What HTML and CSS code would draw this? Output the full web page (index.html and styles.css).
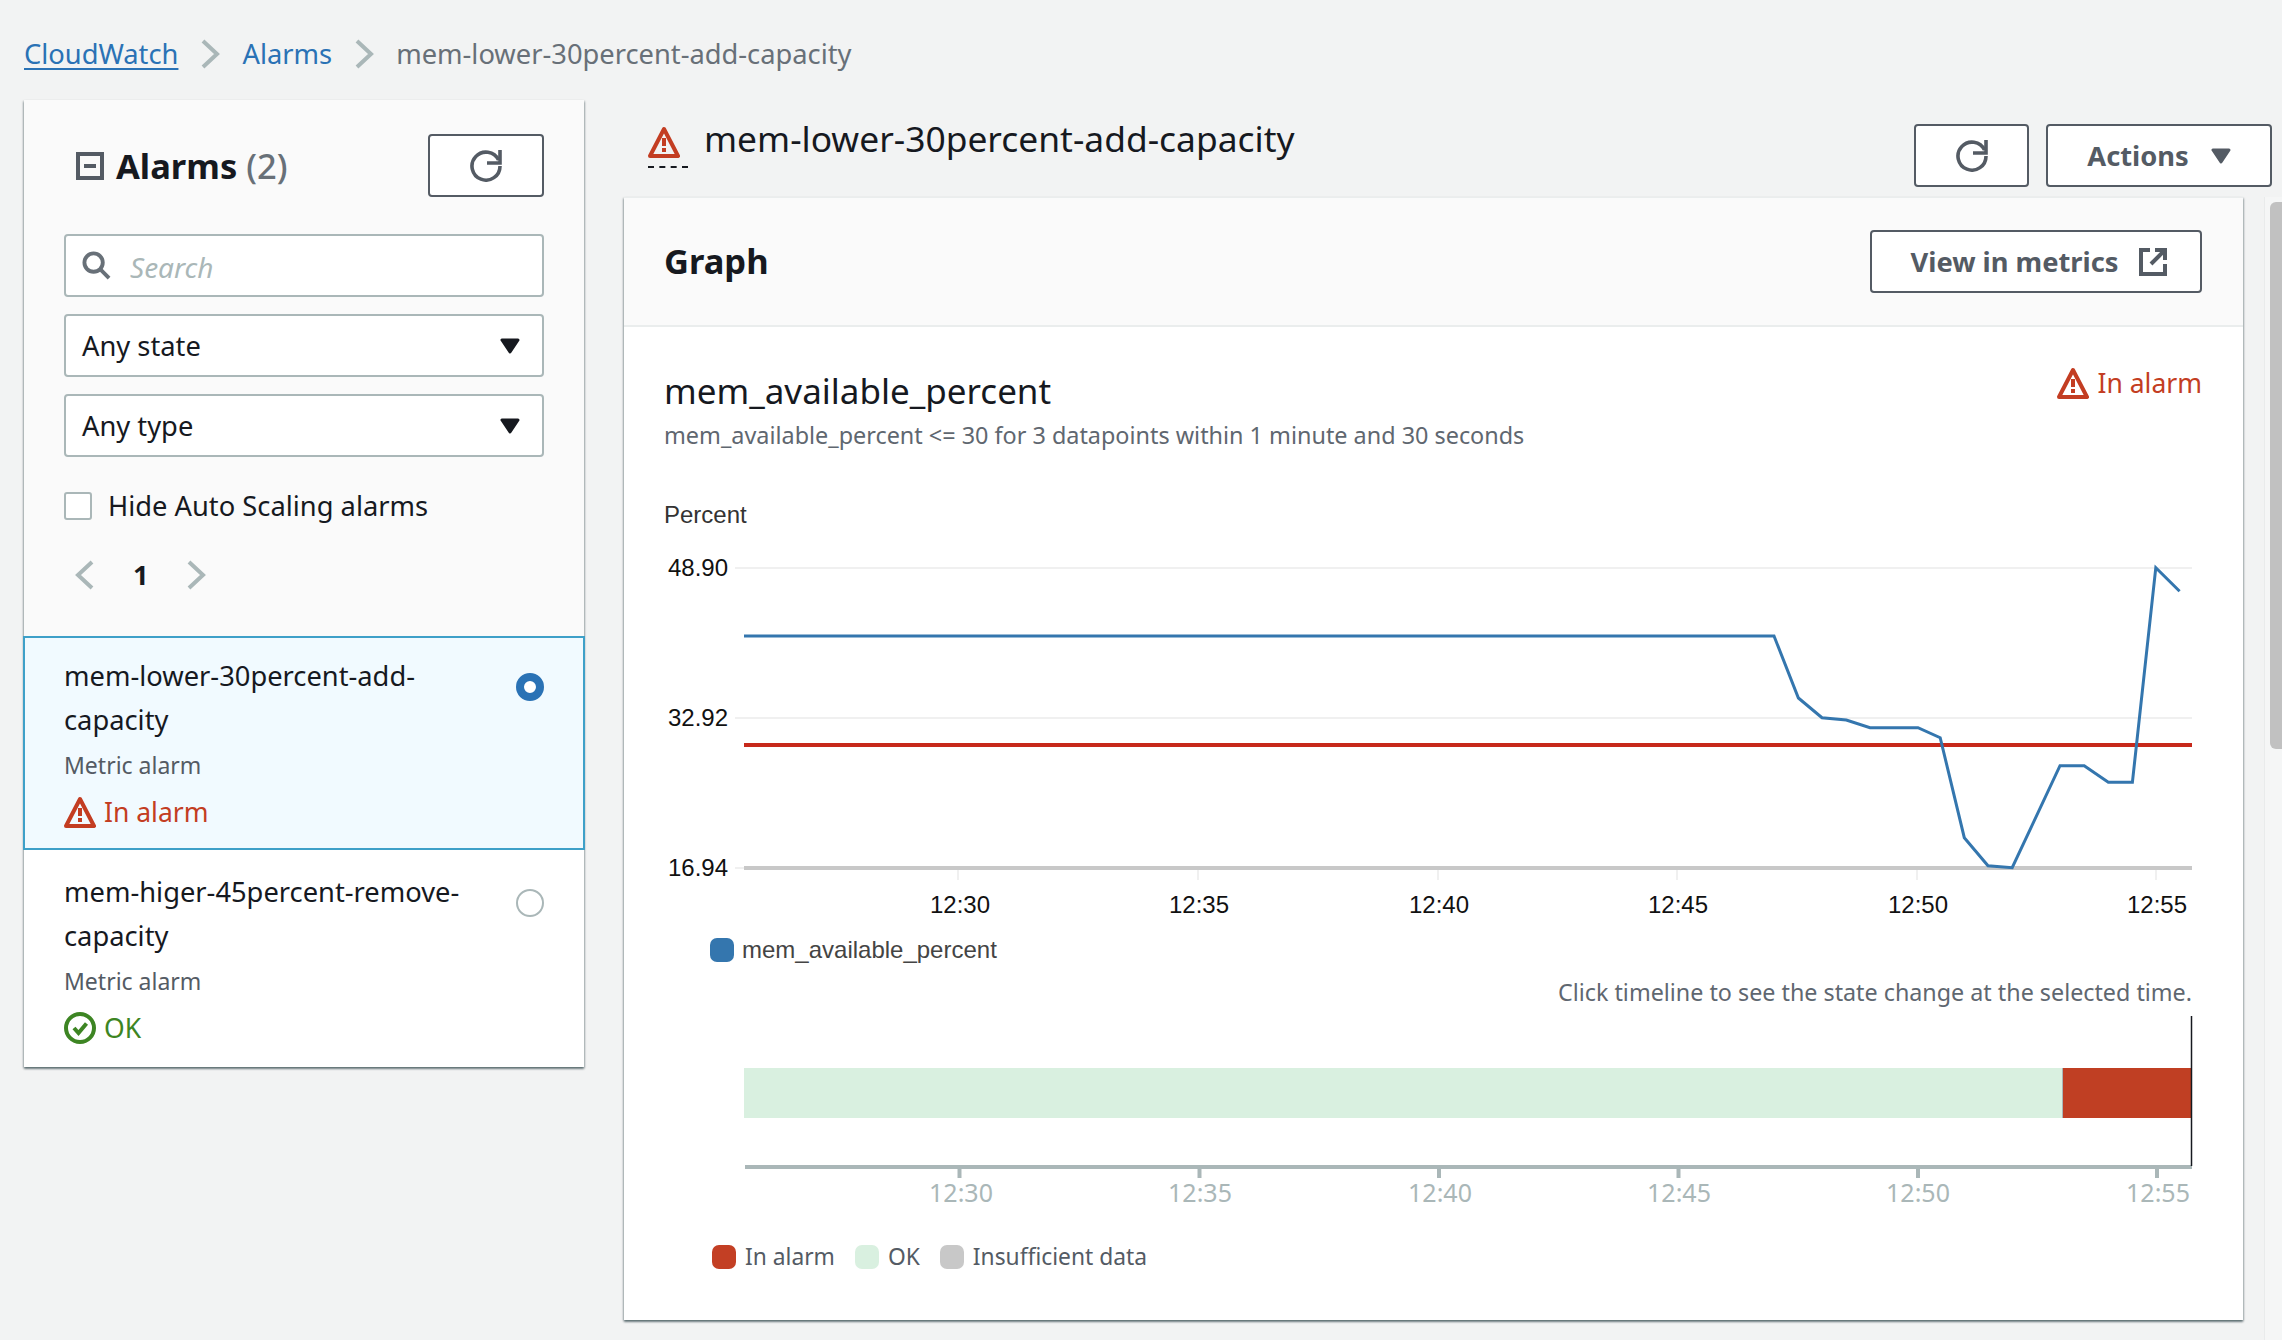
FILE: index.html
```html
<!DOCTYPE html>
<html lang="en">
<head>
    <meta charset="UTF-8">
    <meta name="viewport" content="width=device-width, initial-scale=1.0">
    <title>mem-lower-30percent-add-capacity</title>
    <link rel="stylesheet" href="styles.css">
</head>
<body>
    <svg class="icon-defs" aria-hidden="true">
        <symbol id="i-warning" viewBox="0 0 32 32">
            <path d="M16 3 L30 30 H2 Z" fill="none" stroke="currentColor" stroke-width="4" stroke-linejoin="round"/>
            <rect x="14" y="12" width="4" height="8" fill="currentColor"/>
            <rect x="14" y="22" width="4" height="4" fill="currentColor"/>
        </symbol>
        <symbol id="i-ok" viewBox="0 0 32 32">
            <circle cx="16" cy="16" r="14" fill="none" stroke="currentColor" stroke-width="4"/>
            <path d="M10 16 L14.5 21 L22.5 11.5" fill="none" stroke="currentColor" stroke-width="4"/>
        </symbol>
        <symbol id="i-refresh" viewBox="0 0 32 32">
            <g fill="none" stroke="currentColor" stroke-width="3.6">
                <path d="M17 13 H30 V0"/>
                <path d="M28.6 10 A14 14 0 1 0 30 16"/>
            </g>
        </symbol>
        <symbol id="i-caret" viewBox="0 0 20 16">
            <path d="M2 2 H18 L10 14 Z" fill="currentColor" stroke="currentColor" stroke-width="3" stroke-linejoin="round"/>
        </symbol>
        <symbol id="i-external" viewBox="0 0 28 28">
            <g fill="none" stroke="currentColor" stroke-width="4">
                <path d="M11 2 H2 V26 H26 V16"/>
                <path d="M16 2 H26 V12"/>
                <path d="M26 2 L12 16"/>
            </g>
        </symbol>
        <symbol id="i-chevron" viewBox="0 0 20 30">
            <path d="M3 2 L17 15 L3 28" fill="none" stroke="currentColor" stroke-width="4"/>
        </symbol>
    </svg>

    <nav class="breadcrumb">
        <a class="crumb-link crumb-first" href="#">CloudWatch</a>
        <svg class="crumb-sep"><use href="#i-chevron"/></svg>
        <a class="crumb-link" href="#">Alarms</a>
        <svg class="crumb-sep"><use href="#i-chevron"/></svg>
        <span class="crumb-current">mem-lower-30percent-add-capacity</span>
    </nav>

    <div class="layout">
        <aside class="side">
            <div class="side-top">
                <div class="side-head">
                    <div class="side-title">
                        <svg class="collapse-icon" viewBox="0 0 28 28">
                            <rect x="2" y="2" width="24" height="24" fill="none" stroke="currentColor" stroke-width="4"/>
                            <rect x="8" y="12" width="12" height="4" fill="currentColor"/>
                        </svg>
                        <h2>Alarms <span class="count">(2)</span></h2>
                    </div>
                    <button class="btn btn-refresh"><svg class="refresh-icon"><use href="#i-refresh"/></svg></button>
                </div>

                <div class="field search-field">
                    <svg class="search-icon" viewBox="0 0 30 30">
                        <circle cx="12" cy="12" r="9.5" fill="none" stroke="currentColor" stroke-width="4"/>
                        <path d="M19 19 L28 28" stroke="currentColor" stroke-width="4"/>
                    </svg>
                    <span class="placeholder">Search</span>
                </div>
                <div class="field select-field">Any state <svg class="caret"><use href="#i-caret"/></svg></div>
                <div class="field select-field">Any type <svg class="caret"><use href="#i-caret"/></svg></div>

                <label class="hide-row"><span class="checkbox"></span>Hide Auto Scaling alarms</label>

                <div class="pager">
                    <svg class="pager-arrow pager-prev"><use href="#i-chevron"/></svg>
                    <span class="pager-num">1</span>
                    <svg class="pager-arrow"><use href="#i-chevron"/></svg>
                </div>
            </div>

            <div class="alarm-list">
                <div class="alarm-item selected">
                    <div class="alarm-text">
                        <div class="alarm-name">mem-lower-30percent-add-capacity</div>
                        <div class="alarm-type">Metric alarm</div>
                        <div class="status status-alarm"><svg class="status-icon"><use href="#i-warning"/></svg>In alarm</div>
                    </div>
                    <span class="radio radio-on"></span>
                </div>
                <div class="alarm-item">
                    <div class="alarm-text">
                        <div class="alarm-name">mem-higer-45percent-remove-capacity</div>
                        <div class="alarm-type">Metric alarm</div>
                        <div class="status status-ok"><svg class="status-icon"><use href="#i-ok"/></svg>OK</div>
                    </div>
                    <span class="radio"></span>
                </div>
            </div>
        </aside>

        <main class="content">
            <div class="page-head">
                <div class="page-title">
                    <span class="title-icon"><svg class="status-icon"><use href="#i-warning"/></svg></span>
                    <h1>mem-lower-30percent-add-capacity</h1>
                </div>
                <div class="page-actions">
                    <button class="btn btn-refresh btn-refresh-main"><svg class="refresh-icon"><use href="#i-refresh"/></svg></button>
                    <button class="btn btn-actions">Actions <svg class="caret"><use href="#i-caret"/></svg></button>
                </div>
            </div>

            <section class="card">
                <header class="card-head">
                    <h2>Graph</h2>
                    <button class="btn btn-metrics">View in metrics <svg class="external-icon"><use href="#i-external"/></svg></button>
                </header>

                <div class="graph-info">
                    <div class="graph-title">
                        <div>
                            <h3>mem_available_percent</h3>
                            <p class="graph-desc">mem_available_percent &lt;= 30 for 3 datapoints within 1 minute and 30 seconds</p>
                        </div>
                        <div class="status status-alarm graph-status"><svg class="status-icon"><use href="#i-warning"/></svg>In alarm</div>
                    </div>
                    <div class="axis-name">Percent</div>
                </div>

                <!-- viewBox uses page coordinates so points can be read off the chart directly -->
                <svg class="chart" viewBox="624 535 1619 390">
                    <g class="grid">
                        <line x1="735" y1="568" x2="2192" y2="568"/>
                        <line x1="735" y1="718" x2="2192" y2="718"/>
                        <line x1="735" y1="868" x2="744" y2="868"/>
                        <line x1="958" y1="868" x2="958" y2="880"/>
                        <line x1="1198" y1="868" x2="1198" y2="880"/>
                        <line x1="1438" y1="868" x2="1438" y2="880"/>
                        <line x1="1677" y1="868" x2="1677" y2="880"/>
                        <line x1="1917" y1="868" x2="1917" y2="880"/>
                        <line x1="2156" y1="868" x2="2156" y2="880"/>
                    </g>
                    <line class="x-axis" x1="744" y1="868" x2="2192" y2="868"/>
                    <line class="threshold" x1="744" y1="745" x2="2192" y2="745"/>
                    <polyline class="series" points="744,636 1774,636 1798.4,698 1822,717.7 1846.3,720 1870,727.7 1918,727.7 1940.2,737.7 1964.3,837.7 1988,865.7 2012.2,867.7 2060,765.7 2084.2,765.7 2108.3,782.3 2132.4,782.3 2155.8,567.7 2179.6,591.3"/>
                    <g class="y-labels">
                        <text x="728" y="576">48.90</text>
                        <text x="728" y="726">32.92</text>
                        <text x="728" y="876">16.94</text>
                    </g>
                    <g class="x-labels">
                        <text x="960" y="913">12:30</text>
                        <text x="1199" y="913">12:35</text>
                        <text x="1439" y="913">12:40</text>
                        <text x="1678" y="913">12:45</text>
                        <text x="1918" y="913">12:50</text>
                        <text x="2157" y="913">12:55</text>
                    </g>
                </svg>

                <div class="legend series-legend">
                    <span class="legend-item legend-series"><i class="swatch swatch-blue"></i>mem_available_percent</span>
                </div>

                <p class="timeline-hint">Click timeline to see the state change at the selected time.</p>

                <svg class="timeline" viewBox="624 1016 1619 194">
                    <rect class="tl-ok" x="744" y="1068" width="1319" height="50"/>
                    <rect class="tl-alarm" x="2063" y="1068" width="129" height="50"/>
                    <line class="tl-edge" x1="2062.5" y1="1068" x2="2062.5" y2="1118"/>
                    <line class="tl-axis" x1="745" y1="1167" x2="2192" y2="1167"/>
                    <g class="tl-ticks">
                        <line x1="959.5" y1="1167" x2="959.5" y2="1178"/>
                        <line x1="1199.5" y1="1167" x2="1199.5" y2="1178"/>
                        <line x1="1439" y1="1167" x2="1439" y2="1178"/>
                        <line x1="1678.5" y1="1167" x2="1678.5" y2="1178"/>
                        <line x1="1918" y1="1167" x2="1918" y2="1178"/>
                        <line x1="2157" y1="1167" x2="2157" y2="1178"/>
                    </g>
                    <line class="tl-cursor" x1="2191.5" y1="1016" x2="2191.5" y2="1166"/>
                    <g class="tl-labels">
                        <text x="961" y="1202">12:30</text>
                        <text x="1200" y="1202">12:35</text>
                        <text x="1440" y="1202">12:40</text>
                        <text x="1679" y="1202">12:45</text>
                        <text x="1918" y="1202">12:50</text>
                        <text x="2158" y="1202">12:55</text>
                    </g>
                </svg>

                <div class="legend state-legend">
                    <span class="legend-item"><i class="swatch swatch-red"></i>In alarm</span>
                    <span class="legend-item"><i class="swatch swatch-green"></i>OK</span>
                    <span class="legend-item"><i class="swatch swatch-gray"></i>Insufficient data</span>
                </div>
            </section>
        </main>
    </div>

    <div class="scrollbar"><div class="scroll-thumb"></div></div>
</body>
</html>
```

FILE: styles.css
```css
* {
    box-sizing: border-box;
}
body {
    margin: 0;
    height: 1340px;
    overflow: hidden;
    background-color: #f2f3f3;
    color: #16191f;
    font-family: "Noto Sans", Arial, sans-serif;
    font-size: 27.3px;
    line-height: 44px;
}
h1, h2, h3, p {
    margin: 0;
    font-weight: normal;
}
.icon-defs {
    display: none;
}

/* breadcrumb */
.breadcrumb {
    display: flex;
    align-items: center;
    height: 100px;
    padding: 8px 0 0 24px;
}
.crumb-link {
    color: #2a72b5;
    text-decoration: none;
}
.crumb-first {
    text-decoration: underline;
    text-underline-offset: 4px;
    text-decoration-thickness: 2px;
}
.crumb-sep {
    width: 20px;
    height: 30px;
    margin: 0 22px 0 22px;
    color: #aab7b8;
}
.crumb-current {
    color: #687078;
}

.layout {
    display: flex;
    gap: 40px;
    padding-left: 24px;
}

/* left panel */
.side {
    width: 560px;
    flex: none;
    align-self: flex-start;
    background-color: #fff;
    box-shadow: 0 2px 2px rgba(0, 28, 36, 0.45), 1px 1px 2px rgba(0, 28, 36, 0.2), -1px 1px 2px rgba(0, 28, 36, 0.2);
}
.side-top {
    padding: 34px 40px 39px;
    background-color: #fafafa;
}
.side-head {
    display: flex;
    justify-content: space-between;
    align-items: center;
}
.side-title {
    display: flex;
    align-items: center;
    gap: 12px;
    padding-left: 12px;
}
.collapse-icon {
    width: 28px;
    height: 28px;
    color: #545b64;
}
.side-title h2 {
    font-size: 34.5px;
    font-weight: bold;
}
.count {
    font-weight: 500;
    color: #687078;
}

.btn {
    display: flex;
    align-items: center;
    justify-content: center;
    height: 63px;
    background-color: #fff;
    border: 2px solid #545b64;
    border-radius: 4px;
    color: #545b64;
    font-family: inherit;
    font-size: 27.3px;
    font-weight: bold;
    padding: 0;
}
.btn-refresh {
    width: 116px;
}
.btn-refresh-main {
    width: 115px;
}
.refresh-icon {
    width: 32px;
    height: 32px;
}
.caret {
    width: 20px;
    height: 16px;
}

.field {
    display: flex;
    align-items: center;
    height: 63px;
    padding: 0 16px;
    background-color: #fff;
    border: 2px solid #aab7b8;
    border-radius: 4px;
}
.search-field {
    margin-top: 37px;
    gap: 19px;
}
.search-icon {
    width: 29px;
    height: 29px;
    color: #687078;
}
.placeholder {
    padding-top: 2px;
    color: #aab7b8;
    font-size: 28px;
    font-style: italic;
}
.select-field {
    margin-top: 17px;
    justify-content: space-between;
    padding-right: 22px;
}
.hide-row {
    display: flex;
    align-items: center;
    gap: 16px;
    margin-top: 27px;
}
.checkbox {
    width: 28px;
    height: 28px;
    background-color: #fff;
    border: 2px solid #aab7b8;
    border-radius: 3px;
}
.pager {
    display: flex;
    align-items: center;
    margin-top: 25px;
    padding-left: 11px;
}
.pager-arrow {
    width: 20px;
    height: 30px;
    color: #aab7b8;
}
.pager-prev {
    transform: scaleX(-1);
}
.pager-num {
    margin: 0 37px 0 38px;
    font-weight: bold;
}

/* alarm list */
.alarm-list {
    padding-bottom: 5px;
}
.alarm-item {
    display: flex;
    justify-content: space-between;
    align-items: flex-start;
    padding: 18px 40px 18px 40px;
}
.alarm-item.selected {
    margin: 0 -1px 2px;
    padding: 16px 39px 20px 39px;
    background-color: #f1faff;
    border: 2px solid #3ea0c8;
}
.alarm-text {
    width: 420px;
}
.alarm-type {
    margin-top: 7px;
    color: #545b64;
    font-size: 23px;
    line-height: 32px;
}
.status {
    display: flex;
    align-items: center;
    gap: 8px;
    margin-top: 15px;
    font-size: 26.5px;
    line-height: 32px;
}
.status-icon {
    width: 32px;
    height: 32px;
    flex: none;
}
.status-alarm {
    color: #c33d22;
}
.status-ok {
    color: #3d8523;
}
.radio {
    width: 28px;
    height: 28px;
    margin-top: 19px;
    background-color: #fff;
    border: 2px solid #aab7b8;
    border-radius: 50%;
}
.radio-on {
    border: 8px solid #2a72b5;
}

/* main column */
.content {
    flex: 1;
}
.page-head {
    display: flex;
    justify-content: space-between;
    align-items: flex-start;
    height: 97px;
    padding-right: 10px;
}
.page-title {
    display: flex;
    padding: 16px 0 0 24px;
}
.title-icon {
    width: 40px;
    height: 42px;
    margin: 10px 16px 0 0;
    color: #c33d22;
    border-bottom: 2px dashed #16191f;
}
.page-title h1 {
    font-size: 35.4px;
    line-height: 44px;
}
.page-actions {
    display: flex;
    gap: 17px;
    padding-top: 24px;
}
.btn-actions {
    width: 226px;
    gap: 22px;
}

.card {
    width: 1619px;
    background-color: #fff;
    padding-bottom: 51px;
    box-shadow: 0 2px 2px rgba(0, 28, 36, 0.45), 1px 1px 2px rgba(0, 28, 36, 0.2), -1px 1px 2px rgba(0, 28, 36, 0.2);
}
.card-head {
    display: flex;
    justify-content: space-between;
    align-items: center;
    height: 130px;
    padding: 0 41px 0 40px;
    background-color: #fafafa;
    border-top: 1px solid #eaeded;
    border-bottom: 2px solid #eaeded;
}
.card-head h2 {
    margin-top: -2px;
    font-size: 34.5px;
    font-weight: bold;
}
.btn-metrics {
    width: 332px;
    gap: 20px;
    padding-left: 5px;
}
.external-icon {
    width: 28px;
    height: 28px;
}
.graph-info {
    padding: 42px 41px 0 40px;
}
.graph-title {
    display: flex;
    justify-content: space-between;
    align-items: flex-start;
}
.graph-title h3 {
    font-size: 35px;
}
.graph-desc {
    margin-top: 6px;
    color: #5f6770;
    font-size: 23.4px;
    line-height: 32px;
}
.graph-status {
    margin-top: -2px;
}
.axis-name {
    margin-top: 48px;
    color: #333;
    font-family: "Liberation Sans", Arial, sans-serif;
    font-size: 24px;
    line-height: 32px;
}

/* chart */
.chart {
    display: block;
    width: 1619px;
    height: 390px;
    margin-top: 4px;
}
.chart text {
    font-family: "Liberation Sans", Arial, sans-serif;
    font-size: 24px;
    fill: #111;
}
.grid line {
    stroke: #f0f0f0;
    stroke-width: 2;
}
.x-axis {
    stroke: #c8c8c8;
    stroke-width: 4;
}
.threshold {
    stroke: #c7291b;
    stroke-width: 4;
}
.series {
    fill: none;
    stroke: #3476ae;
    stroke-width: 3;
}
.y-labels text {
    text-anchor: end;
}
.x-labels text,
.tl-labels text {
    text-anchor: middle;
}

/* legends */
.legend {
    display: flex;
    align-items: center;
    height: 24px;
    padding-left: 88px;
    gap: 20px;
    font-size: 22.8px;
    color: #545b64;
}
.series-legend {
    margin-top: 13px;
    padding-left: 86px;
    font-size: 24px;
}
.legend-item {
    display: flex;
    align-items: center;
    gap: 9px;
}
.legend-series {
    gap: 8px;
    font-family: "Liberation Sans", Arial, sans-serif;
    color: #444;
}
.swatch {
    width: 24px;
    height: 24px;
    border-radius: 7px;
}
.swatch-blue {
    background-color: #3476ae;
}
.swatch-red {
    background-color: #c33f24;
}
.swatch-green {
    background-color: #d9f0e0;
}
.swatch-gray {
    background-color: #c8c8c8;
}
.timeline-hint {
    margin-top: 14px;
    padding-right: 51px;
    color: #5f6770;
    font-size: 23.3px;
    line-height: 32px;
    text-align: right;
}
.timeline {
    display: block;
    width: 1619px;
    height: 194px;
    margin-top: 8px;
}
.tl-ok {
    fill: #d9f0e0;
}
.tl-alarm {
    fill: #c03f23;
}
.tl-edge {
    stroke: #aab7b8;
    stroke-width: 1;
}
.tl-axis,
.tl-ticks line {
    stroke: #aab7b8;
    stroke-width: 4;
}
.tl-cursor {
    stroke: #16191f;
    stroke-width: 1.5;
}
.tl-labels text {
    fill: #aab7b8;
    font-family: "Noto Sans", Arial, sans-serif;
    font-size: 25px;
}
.state-legend {
    margin-top: 35px;
}

.scrollbar {
    position: absolute;
    top: 197px;
    right: 0;
    width: 18px;
    height: 1143px;
    background-color: #f5f6f6;
    border-left: 1px solid #e9ebeb;
}
.scroll-thumb {
    position: absolute;
    top: 5px;
    right: 0;
    width: 12px;
    height: 547px;
    background-color: #c1c1c1;
    border-radius: 6px 0 0 6px;
}
```
